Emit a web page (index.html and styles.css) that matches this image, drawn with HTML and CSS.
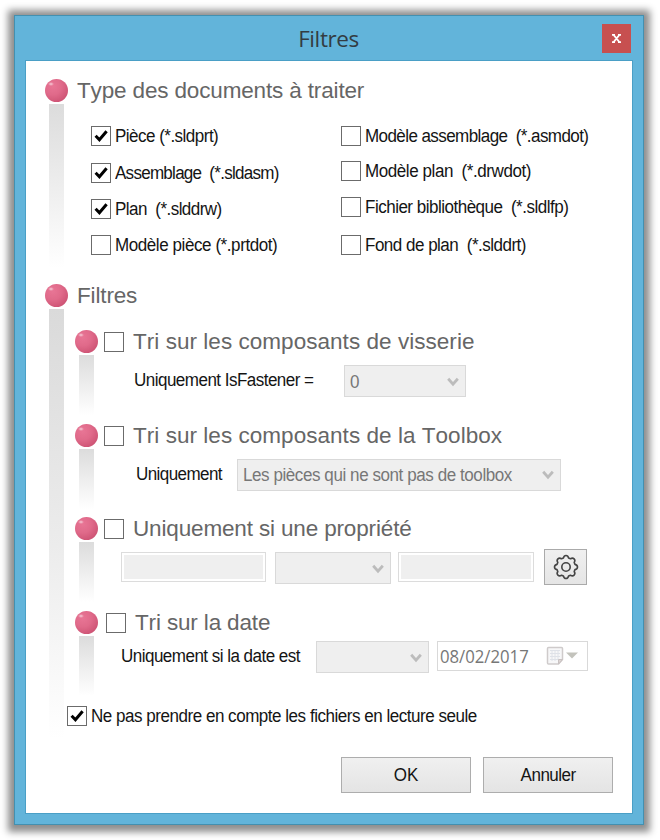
FILE: index.html
```html
<!DOCTYPE html>
<html lang="fr">
<head>
<meta charset="utf-8">
<title>Filtres</title>
<link rel="stylesheet" href="styles.css">
</head>
<body>
<svg width="0" height="0" class="defs">
  <symbol id="tick" viewBox="0 0 20 20"><path d="M4.6 9.8 8.4 13.8 15.6 5.2" fill="none" stroke="#000" stroke-width="3"/></symbol>
  <symbol id="chevron" viewBox="0 0 12 10"><path d="M1.2 1.8 6 7.2 10.8 1.8" fill="none" stroke="#bcbcbc" stroke-width="2.8"/></symbol>
</svg>
<main class="window">
  <header class="titlebar">
    <h1 class="title">Filtres</h1>
    <button class="close" aria-label="Fermer"><svg width="9" height="9" viewBox="0 0 9 9"><path d="M0 .8h3M6 .8h3M0 8.2h3M6 8.2h3M1.7 1 7.3 8M7.3 1 1.7 8" stroke="#fff" stroke-width="1.9" fill="none"/></svg></button>
  </header>
  <div class="client">
    <section class="section types">
      <div class="rail"><i class="ball"></i><i class="bar"></i></div>
      <div class="body">
        <h2 class="heading tight">Type des documents à traiter</h2>
        <div class="columns">
          <div class="col">
            <label class="option"><span class="box"><svg><use href="#tick"/></svg></span><span class="txt ls55">Pièce (*.sldprt)</span></label>
            <label class="option gap17"><span class="box"><svg><use href="#tick"/></svg></span><span class="txt ls73">Assemblage&nbsp; (*.sldasm)</span></label>
            <label class="option gap16"><span class="box"><svg><use href="#tick"/></svg></span><span class="txt ls57">Plan&nbsp; (*.slddrw)</span></label>
            <label class="option gap16"><span class="box"></span><span class="txt ls45">Modèle pièce (*.prtdot)</span></label>
          </div>
          <div class="col">
            <label class="option"><span class="box"></span><span class="txt ls61">Modèle assemblage&nbsp; (*.asmdot)</span></label>
            <label class="option gap15"><span class="box"></span><span class="txt ls45">Modèle plan&nbsp; (*.drwdot)</span></label>
            <label class="option gap16"><span class="box"></span><span class="txt ls53">Fichier bibliothèque&nbsp; (*.sldlfp)</span></label>
            <label class="option gap18"><span class="box"></span><span class="txt ls53">Fond de plan&nbsp; (*.slddrt)</span></label>
          </div>
        </div>
      </div>
    </section>

    <section class="section filters">
      <div class="rail"><i class="ball"></i><i class="bar"></i></div>
      <div class="body">
        <h2 class="heading tight">Filtres</h2>
        <div class="subs">
          <section class="section sub">
            <div class="rail"><i class="ball"></i><i class="bar"></i></div>
            <div class="body">
              <label class="subhead"><span class="box"></span>Tri sur les composants de visserie</label>
              <div class="fields fastener">
                <span class="lbl txt ls55">Uniquement IsFastener =</span>
                <span class="select"><span class="txt">0</span><svg><use href="#chevron"/></svg></span>
              </div>
            </div>
          </section>
          <section class="section sub">
            <div class="rail"><i class="ball"></i><i class="bar"></i></div>
            <div class="body">
              <label class="subhead"><span class="box"></span>Tri sur les composants de la Toolbox</label>
              <div class="fields toolbox">
                <span class="lbl txt ls61">Uniquement</span>
                <span class="select"><span class="txt ls45">Les pièces qui ne sont pas de toolbox</span><svg><use href="#chevron"/></svg></span>
              </div>
            </div>
          </section>
          <section class="section sub">
            <div class="rail"><i class="ball"></i><i class="bar"></i></div>
            <div class="body">
              <label class="subhead tight"><span class="box"></span>Uniquement si une propriété</label>
              <div class="fields property">
                <span class="input name"></span>
                <span class="select"><svg><use href="#chevron"/></svg></span>
                <span class="input value"></span>
                <button class="gear" aria-label="Options"><svg width="26" height="26" viewBox="-13 -13 26 26" fill="none" stroke="#444" stroke-width="1.6" stroke-linejoin="round"><path d="M-2.6 -9 Q-2 -11.5 0 -11.5 Q2 -11.5 2.6 -9 L4.500 -8.2 Q6.6 -9.6 8.1 -8.1 Q9.6 -6.6 8.2 -4.500 L9 -2.6 Q11.500 -2 11.500 0 Q11.500 2 9 2.6 L8.2 4.500 Q9.6 6.6 8.1 8.1 Q6.6 9.6 4.500 8.2 L2.6 9 Q2 11.500 0 11.500 Q-2 11.500 -2.6 9 L-4.500 8.2 Q-6.6 9.6 -8.1 8.1 Q-9.6 6.6 -8.2 4.500 L-9 2.6 Q-11.500 2 -11.500 0 Q-11.500 -2 -9 -2.6 L-8.2 -4.500 Q-9.6 -6.6 -8.1 -8.1 Q-6.6 -9.6 -4.500 -8.2 Z"/><circle r="4.2"/></svg></button>
              </div>
            </div>
          </section>
          <section class="section sub">
            <div class="rail"><i class="ball"></i><i class="bar"></i></div>
            <div class="body">
              <label class="subhead shifted tight"><span class="box"></span>Tri sur la date</label>
              <div class="fields date">
                <span class="lbl txt ls55">Uniquement si la date est</span>
                <span class="select"><svg><use href="#chevron"/></svg></span>
                <span class="datebox"><span class="datetext">08/02/2017</span>
                  <svg width="32" height="20" viewBox="0 0 32 20"><path d="M2.500 1.500h13q1 0 1 1v11l-4 4.500h-10q-1 0-1-1v-14.500q0-1 1-1z" fill="#f7f7f8" stroke="#cfcbcb" stroke-width="1.5"/><path d="M4 4.500h10M4 7.500h10M4 10.500h10M4 13.500h8M6 4v11M9 4v11M12 4v10" stroke="#dfe2e8" stroke-width="1" fill="none"/><path d="M12.500 18v-4.500h4z" fill="#ddd5d3" stroke="#c9c2c2"/><path d="M20 6.500h12l-6 6z" fill="#c3c3bc"/></svg>
                </span>
              </div>
            </div>
          </section>
        </div>
        <label class="option readonly"><span class="box"><svg><use href="#tick"/></svg></span><span class="txt ls50">Ne pas prendre en compte les fichiers en lecture seule</span></label>
      </div>
    </section>

    <footer class="actions">
      <button class="btn"><span class="txt">OK</span></button>
      <button class="btn"><span class="txt ls53">Annuler</span></button>
    </footer>
  </div>
</main>
</body>
</html>
```
FILE: styles.css
```css
* { box-sizing: border-box; }
body {
  margin: 0;
  padding: 15px 0 0 14px;
  height: 840px;
  overflow: hidden;
  background: #fff;
  color: #141414;
  font: 18px/20px "Liberation Sans", Arial, sans-serif;
}
.defs { display: block; height: 0; }
button { padding: 0; font: inherit; color: inherit; }
/* condensed dialog text */
.txt {
  display: inline-block;
  transform: scaleX(.945);
  transform-origin: left;
}
.window {
  display: flex;
  flex-direction: column;
  width: 630px;
  height: 810px;
  padding: 0 10px 10px;
  border: 1px solid #4390b0;
  background: #62b4da;
  box-shadow: 0 1px 7px 6px #8f8f8f;
}
.titlebar {
  display: grid;
  grid-template-columns: 1fr 29px;
  align-items: center;
  height: 44px;
  padding: 1px 2px 0 30px;
}
.title {
  margin: 0;
  text-align: center;
  font: 400 22.5px/30px "Open Sans", "Noto Sans", sans-serif;
  letter-spacing: -0.4px;
  color: #333c42;
}
.close {
  display: flex;
  align-items: center;
  justify-content: center;
  width: 29px;
  height: 29px;
  border: 0;
  background: #c75050;
}
.client {
  flex: 1;
  border: 1px solid #4a9fc6;
  background: #fff;
}
.section { display: flex; }
.rail {
  display: flex;
  flex-direction: column;
  flex: none;
  width: 22px;
}
.ball {
  flex: none;
  width: 23px;
  height: 23px;
  border-radius: 50%;
  background:
    radial-gradient(ellipse 3px 2px at 6px 5px, rgba(255,255,255,.65), transparent),
    radial-gradient(circle at 8px 7px, #e87595 0, #e06a8a 40%, #cf5576 75%, #b84566 100%);
}
.bar {
  width: 15px;
  margin: 2px 0 0 4px;
  background: linear-gradient(#dcdcdc, #fff);
}
.body { flex: 1; }
.types { height: 205px; margin: 18px 0 0 19px; }
.types > .rail > .bar { height: 164px; }
.filters { height: 455px; margin-left: 19px; }
.filters > .rail > .bar {
  height: 430px;
  background: linear-gradient(#dadada, #ececec 55%, #fff);
}
.heading, .subhead {
  margin: 0;
  font-weight: 400;
  font-size: 22.5px;
  line-height: 24px;
  font-kerning: none;
  letter-spacing: .04px;
  color: #666;
}
.heading { height: 23px; padding-left: 10px; }
.heading.tight, .subhead.tight { letter-spacing: -.15px; }
.columns { display: flex; padding: 24px 0 0 24px; }
.col { width: 250px; }
.option {
  display: flex;
  gap: 4px;
  height: 20px;
  line-height: 21px;
  white-space: nowrap;
}
.gap15 { margin-top: 15px; }
.gap16 { margin-top: 16px; }
.gap17 { margin-top: 17px; }
.gap18 { margin-top: 18px; }
.box {
  flex: none;
  width: 20px;
  height: 20px;
  border: 1.5px solid #6b6b6b;
  background: #fff;
}
.box svg { display: block; width: 20px; height: 20px; margin: -1px; }
.subs { margin: 23px 0 0 8px; }
.sub { height: 93.5px; }
.sub .bar { height: 60px; }
.subhead { display: flex; gap: 9px; height: 23px; padding-left: 7px; }
.subhead .box { margin-top: 2px; }
.shifted { padding-left: 9px; }
.fields { display: flex; white-space: nowrap; }
.lbl { flex: none; line-height: 30px; }
.select {
  display: flex;
  align-items: center;
  justify-content: space-between;
  flex: none;
  height: 32px;
  padding: 1px 6px 0 5px;
  border: 1.5px solid #d9d9d9;
  background: #efefef;
  color: #777;
}
.select svg { flex: none; width: 12px; height: 10px; margin-left: auto; }
.fastener { padding: 12px 0 0 37px; }
.fastener .lbl { width: 210px; }
.fastener .select { width: 122px; }
.toolbox { padding: 12px 0 0 39px; }
.toolbox .lbl { width: 101px; }
.toolbox .select { width: 324px; }
.property { padding: 9px 0 0 24px; align-items: flex-start; }
.property .select { width: 116px; margin: 3px 7px 0 9px; }
.input {
  height: 30px;
  margin-top: 3px;
  border: 1.5px solid #dcdcdc;
  background: #efefef;
  box-shadow: inset 0 0 0 2px #fff;
}
.name { width: 145px; }
.value { width: 136px; }
.gear {
  display: flex;
  align-items: center;
  justify-content: center;
  width: 43px;
  height: 36px;
  margin-left: 10px;
  border: 1.5px solid #aaa;
  background: linear-gradient(#f0f0f0, #e5e5e5);
}
.date { padding: 7.5px 0 0 24px; }
.date .lbl { width: 195px; }
.date .select { width: 113px; }
.datebox {
  display: flex;
  justify-content: space-between;
  align-items: center;
  width: 151px;
  height: 30px;
  margin-left: 8px;
  padding: 0 9px 0 2px;
  border: 1.5px solid #d9d9d9;
}
.datetext {
  width: 90px;
  font: 19px/28px "Open Sans", "Noto Sans", sans-serif;
  color: #777;
  transform: scaleX(.88);
  transform-origin: left;
}
.readonly { margin-top: 2px; }
.actions {
  display: flex;
  gap: 12px;
  justify-content: flex-end;
  padding: 18px 19px 0 0;
}
.btn {
  width: 130px;
  height: 36px;
  border: 1.5px solid #adadad;
  background: linear-gradient(#f0f0f0, #e4e4e4);
}
.btn .txt { transform-origin: center; }
.ls45 { letter-spacing: -.45px; }
.ls50 { letter-spacing: -.5px; }
.ls53 { letter-spacing: -.53px; }
.ls55 { letter-spacing: -.55px; }
.ls57 { letter-spacing: -.57px; }
.ls61 { letter-spacing: -.61px; }
.ls73 { letter-spacing: -.77px; }
```
